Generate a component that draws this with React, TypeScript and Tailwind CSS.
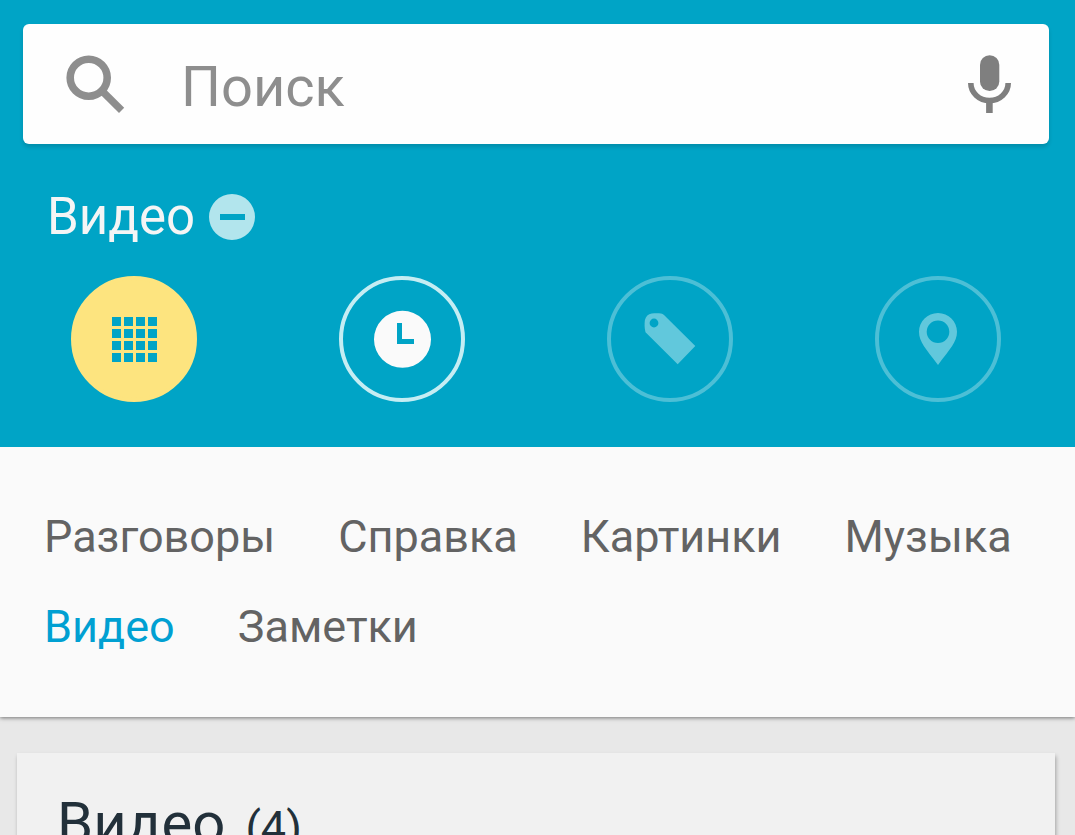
import { useState } from "react"
import type { ReactNode } from "react"
import clsx from "clsx"

type Filter = {
  id: string
  label: string
  style: string
  icon: ReactNode
}

const categories = ["Разговоры", "Справка", "Картинки", "Музыка", "Видео", "Заметки"]

const cells = [8, 20, 32, 44]

const filters: Filter[] = [
  {
    id: "category",
    label: "Категория",
    style: "bg-[#fde47f] text-[#00a4c6] border-[#fde47f]",
    icon: (
      <>
        {cells.map((y) => cells.map((x) => <rect key={`${x}-${y}`} x={x} y={y} width="9" height="9" />))}
      </>
    ),
  },
  {
    id: "time",
    label: "Время",
    style: "text-[#fafafa] border-[#c5edf3]",
    icon: (
      <path
        fillRule="evenodd"
        d="M30.5 1.8a28.5 28.5 0 1 0 0 57a28.5 28.5 0 1 0 0-57zM25 14h5v16h12v5H25z"
      />
    ),
  },
  {
    id: "tag",
    label: "Метка",
    style: "text-[#61c8dc] border-[#4cbfd6]",
    icon: (
      <path
        fillRule="evenodd"
        d="M11.7 4.6C15 4.1 18 4.1 21 4.5c1.3.2 2 .6 3 1.5L55.3 37L37.7 55.3L5.5 23.2C4.4 19 4.4 15 4.9 11C6 7.5 8 5.2 11.7 4.6zM14 9.6a4.4 4.4 0 1 0 0 8.8a4.4 4.4 0 1 0 0-8.8z"
      />
    ),
  },
  {
    id: "place",
    label: "Место",
    style: "text-[#61c8dc] border-[#4cbfd6]",
    icon: (
      <path
        fillRule="evenodd"
        d="M30 4C19.5 4 11 12.4 11 22.8C11 33 18 40 30 56C42 40 49 33 49 22.8C49 12.4 40.5 4 30 4zM30 11.5a11.3 11.3 0 1 1 0 22.6a11.3 11.3 0 1 1 0-22.6z"
      />
    ),
  },
]

function SearchBar() {
  return (
    <div className="flex h-[120px] items-center rounded-md bg-[#fefefe] pr-[35px] pl-[43px] shadow-[0_3px_4px_rgba(0,0,0,0.14)]">
      <svg viewBox="0 0 60 60" className="size-[60px] shrink-0" fill="none" stroke="#8e8e8e" aria-hidden="true">
        <circle cx="22.7" cy="23.7" r="18.5" strokeWidth="7.6" />
        <path d="M35.2 36.2L55.6 56.3" strokeWidth="7.4" />
      </svg>
      <input
        type="text"
        aria-label="Поиск"
        placeholder="Поиск"
        className="ml-[55px] h-[78px] min-w-0 flex-1 bg-transparent pt-1.5 text-[56px] leading-[72px] text-[#444] outline-none placeholder:text-[#8e8e8e] placeholder:opacity-100"
      />
      <button type="button" aria-label="Голосовой поиск" className="shrink-0">
        <svg viewBox="0 0 48 60" className="h-[60px] w-12" fill="none" aria-hidden="true">
          <rect x="14" y="1.3" width="19.3" height="35.7" rx="9.6" fill="#7f7f7f" />
          <path d="M4.8 29a18.7 17.6 0 0 0 37.4 0" stroke="#7f7f7f" strokeWidth="5.6" />
          <path d="M23.4 46v13" stroke="#7f7f7f" strokeWidth="6.6" />
        </svg>
      </button>
    </div>
  )
}

export default function App() {
  const [selected, setSelected] = useState("Видео")

  return (
    <div className="flex h-screen flex-col overflow-hidden bg-[#e8e8e8] font-[Roboto,sans-serif]">
      <header className="z-20 shrink-0 bg-[#00a4c6] pt-6 pb-[45px]">
        <div className="pr-[26px] pl-[23px]">
          <SearchBar />
        </div>

        <div className="mt-[50px] flex h-[46px] items-center gap-3.5 pl-[47px]">
          <span className="text-[51px] leading-[42px] text-[#f5f5f5]">{selected}</span>
          <button type="button" aria-label="Убрать фильтр">
            <svg viewBox="0 0 46 46" className="size-[46px]" aria-hidden="true">
              <path
                fill="#b2e5ed"
                fillRule="evenodd"
                d="M23 0a23 23 0 1 0 0 46a23 23 0 1 0 0-46zM11 20h25v6H11z"
              />
            </svg>
          </button>
        </div>

        <div className="mt-9 grid grid-cols-4 justify-items-center pr-[3px]">
          {filters.map((filter) => (
            <button
              key={filter.id}
              type="button"
              aria-label={filter.label}
              className={clsx("flex size-[126px] items-center justify-center rounded-full border-4", filter.style)}
            >
              <svg viewBox="0 0 60 60" className="size-[60px]" fill="currentColor" aria-hidden="true">
                {filter.icon}
              </svg>
            </button>
          ))}
        </div>
      </header>

      <nav className="z-10 flex shrink-0 flex-wrap gap-x-[63px] bg-[#fafafa] px-11 py-[45px] shadow-[0_1px_4px_rgba(0,0,0,0.5)]">
        {categories.map((category) => (
          <button
            key={category}
            type="button"
            onClick={() => setSelected(category)}
            className={clsx(
              "text-[45px] leading-[90px]",
              category === selected ? "text-[#00a0d2]" : "text-[#636363]"
            )}
          >
            {category}
          </button>
        ))}
      </nav>

      <main className="flex flex-1 flex-col pt-9 pr-5 pl-[17px]">
        <section className="flex-1 bg-[#f1f1f1] px-10 pt-10 shadow-[1px_3px_4px_rgba(0,0,0,0.3)]">
          <h2 className="flex items-baseline gap-5 text-[58px] leading-[60px] text-[#22303a]">
            {selected} <span className="text-[45px]">(4)</span>
          </h2>
        </section>
      </main>
    </div>
  )
}
